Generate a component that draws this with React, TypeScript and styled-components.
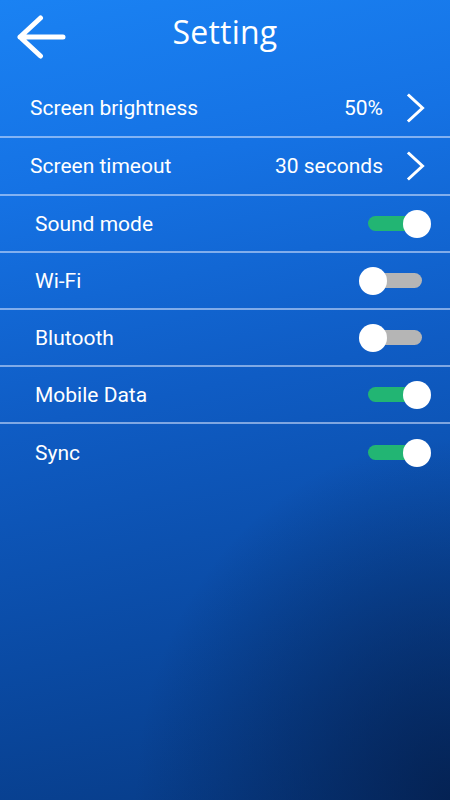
import React from 'react'
import styled, { createGlobalStyle } from 'styled-components'

interface NavItem {
	label: string
	value: string
}

interface ToggleItem {
	label: string
	on: boolean
}

const navItems: NavItem[] = [
	{ label: 'Screen brightness', value: '50%' },
	{ label: 'Screen timeout', value: '30 seconds' },
]

const toggleItems: ToggleItem[] = [
	{ label: 'Sound mode', on: true },
	{ label: 'Wi-Fi', on: false },
	{ label: 'Blutooth', on: false },
	{ label: 'Mobile Data', on: true },
	{ label: 'Sync', on: true },
]

const App: React.FC = () => {
	return (
		<>
			<GlobalStyle />
			<Screen>
				<Header>
					<BackButton aria-label='Back'>
						<svg width='50' height='44' viewBox='0 0 50 44' fill='none'>
							<path
								d='M3 22 H46 M3 22 L23.5 3 M3 22 L23.5 41'
								stroke='#fff'
								strokeWidth='5'
								strokeLinecap='round'
								strokeLinejoin='round'
							/>
						</svg>
					</BackButton>
					<Title>Setting</Title>
				</Header>

				<List>
					{navItems.map((item) => (
						<NavRow key={item.label}>
							<Label>{item.label}</Label>
							<Value>{item.value}</Value>
							<svg width='20' height='30' viewBox='0 0 20 30' fill='none'>
								<path d='M3 2.5 L16.5 15 L3 27.5' stroke='#fff' strokeWidth='3' strokeLinecap='square' />
							</svg>
						</NavRow>
					))}
					{toggleItems.map((item) => (
						<ToggleRow key={item.label}>
							<Label>{item.label}</Label>
							<Track $on={item.on}>
								<Knob $on={item.on} />
							</Track>
						</ToggleRow>
					))}
				</List>
			</Screen>
		</>
	)
}

const GlobalStyle = createGlobalStyle`
	html, body {
		margin: 0;
		padding: 0;
	}
	body {
		font-family: Roboto, "Liberation Sans", sans-serif;
	}
`

const Screen = styled.div`
	width: 450px;
	height: 800px;
	overflow: hidden;
	color: #fff;
	background:
		radial-gradient(ellipse 70% 45% at 100% 100%, rgba(4, 30, 75, 0.85), rgba(4, 30, 75, 0) 100%),
		linear-gradient(168deg, #1a82f3 0%, #1572e4 22%, #0f5cc4 48%, #0a4aa3 75%, #073a84 100%);
`

const Header = styled.header`
	display: grid;
	grid-template-columns: 1fr auto 1fr;
	align-items: start;
	height: 80px;
	padding-top: 15px;
	box-sizing: border-box;
`

const BackButton = styled.div`
	justify-self: start;
	margin: 0 0 0 17px;
	width: 50px;
	height: 44px;
`

const Title = styled.h1`
	margin: 1px 0 0;
	font-family: "Open Sans", "Liberation Sans", sans-serif;
	font-size: 32px;
	line-height: 32px;
	font-weight: 400;
	letter-spacing: 0.2px;
`

const List = styled.div`
	display: flex;
	flex-direction: column;
`

const Row = styled.div`
	display: flex;
	align-items: center;
	box-sizing: border-box;
	border-bottom: 2px solid rgba(220, 232, 255, 0.55);

	&:last-child {
		border-bottom: none;
	}
`

const NavRow = styled(Row)`
	height: 58px;
	padding: 0 24px 0 30px;
	gap: 23px;
`

const ToggleRow = styled(Row)`
	height: 57px;
	padding: 0 28px 0 35px;
`

const Label = styled.span`
	flex: 1;
	font-size: 21px;
`

const Value = styled.span`
	font-size: 21px;
`

const Track = styled.div<{ $on: boolean }>`
	position: relative;
	width: 54px;
	height: 15px;
	border-radius: 8px;
	background: ${(p) => (p.$on ? '#22b573' : '#b5b5b5')};
`

const Knob = styled.div<{ $on: boolean }>`
	position: absolute;
	top: 50%;
	left: ${(p) => (p.$on ? '35px' : '-9px')};
	width: 28px;
	height: 28px;
	border-radius: 50%;
	background: #fff;
	transform: translateY(-50%);
`

export default App
